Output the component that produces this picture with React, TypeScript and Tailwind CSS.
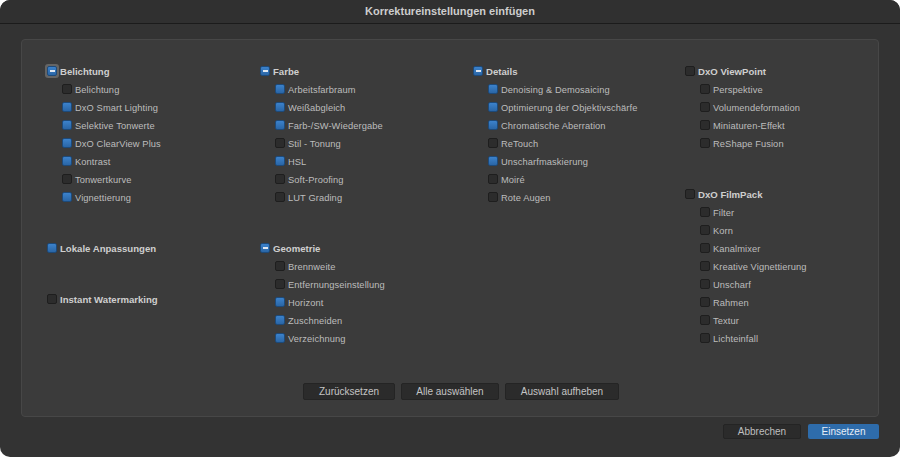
import React from "react";

type State = "on" | "off" | "mixed";

function Box({ s, focus }: { s: State; focus?: boolean }) {
  const base =
    s === "off"
      ? "bg-[#2c2c2c] border-[#1e1e1e]"
      : "bg-gradient-to-b from-[#3c82cb] to-[#2a66a6] border-[#1d4a7a]";
  const box = (
    <span
      className={`relative flex h-[10px] w-[10px] shrink-0 items-center justify-center rounded-[2px] border ${base}`}
    >
      {s === "mixed" && <span className="h-[1.5px] w-[5px] bg-[#dfe7f1]" />}
    </span>
  );
  if (focus) {
    return (
      <span className="-m-[2px] flex h-[14px] w-[14px] shrink-0 items-center justify-center rounded-[3px] bg-[#656565]">
        {box}
      </span>
    );
  }
  return box;
}

type Group = { title: string; s: State; focus?: boolean; items: [string, boolean][] };

function GroupView({ g, first }: { g: Group; first?: boolean }) {
  return (
    <div className={first ? "" : "mt-[33px]"}>
      <div className="flex h-[18px] items-center gap-[3px]">
        <Box s={g.s} focus={g.focus} />
        <span className="pt-[1px] text-[9.6px] leading-[14px] font-bold text-[#cfcfcf]">{g.title}</span>
      </div>
      {g.items.map(([t, on]) => (
        <div key={t} className="flex h-[18px] items-center gap-[3px] pl-[15px]">
          <Box s={on ? "on" : "off"} />
          <span className="pt-[1px] text-[9.3px] leading-[14px] tracking-[0.1px] text-[#bdbdbd]">{t}</span>
        </div>
      ))}
    </div>
  );
}

const cols: Group[][] = [
  [
    {
      title: "Belichtung",
      s: "mixed",
      focus: true,
      items: [
        ["Belichtung", false],
        ["DxO Smart Lighting", true],
        ["Selektive Tonwerte", true],
        ["DxO ClearView Plus", true],
        ["Kontrast", true],
        ["Tonwertkurve", false],
        ["Vignettierung", true],
      ],
    },
    { title: "Lokale Anpassungen", s: "on", items: [] },
    { title: "Instant Watermarking", s: "off", items: [] },
  ],
  [
    {
      title: "Farbe",
      s: "mixed",
      items: [
        ["Arbeitsfarbraum", true],
        ["Weißabgleich", true],
        ["Farb-/SW-Wiedergabe", true],
        ["Stil - Tonung", false],
        ["HSL", true],
        ["Soft-Proofing", false],
        ["LUT Grading", false],
      ],
    },
    {
      title: "Geometrie",
      s: "mixed",
      items: [
        ["Brennweite", false],
        ["Entfernungseinstellung", false],
        ["Horizont", true],
        ["Zuschneiden", true],
        ["Verzeichnung", true],
      ],
    },
  ],
  [
    {
      title: "Details",
      s: "mixed",
      items: [
        ["Denoising & Demosaicing", true],
        ["Optimierung der Objektivschärfe", true],
        ["Chromatische Aberration", true],
        ["ReTouch", false],
        ["Unscharfmaskierung", true],
        ["Moiré", false],
        ["Rote Augen", false],
      ],
    },
  ],
  [
    {
      title: "DxO ViewPoint",
      s: "off",
      items: [
        ["Perspektive", false],
        ["Volumendeformation", false],
        ["Miniaturen-Effekt", false],
        ["ReShape Fusion", false],
      ],
    },
    {
      title: "DxO FilmPack",
      s: "off",
      items: [
        ["Filter", false],
        ["Korn", false],
        ["Kanalmixer", false],
        ["Kreative Vignettierung", false],
        ["Unscharf", false],
        ["Rahmen", false],
        ["Textur", false],
        ["Lichteinfall", false],
      ],
    },
  ],
];

function Btn({ children, w }: { children: React.ReactNode; w: string }) {
  return (
    <div
      className={`flex h-[17px] ${w} items-center justify-center rounded-[2px] border border-[#242424] bg-[#2b2b2b] text-[10px] text-[#c4c4c4]`}
    >
      {children}
    </div>
  );
}

export default function App() {
  return (
    <div
      className="h-[457px] w-[900px] bg-white"
      style={{ fontFamily: '"Liberation Sans", Arial, sans-serif' }}
    >
      <div className="flex h-full w-full flex-col overflow-hidden rounded-[10px] bg-[#333333]">
        <div className="flex h-[24px] shrink-0 items-center justify-center border-b border-[#1b1b1b] bg-[#303030]">
          <span className="text-[11px] font-bold text-[#cdcdcd]">Korrektureinstellungen einfügen</span>
        </div>
        <div className="flex flex-1 flex-col px-[21px] pt-[15px]">
          <div className="flex h-[378px] flex-col rounded-[4px] border border-[#474747] bg-[#3b3b3b] pl-[25px] pt-[22px]">
            <div className="flex flex-1">
              <div className="w-[213px]">
                {cols[0].map((g, i) => (
                  <GroupView key={g.title} g={g} first={i === 0} />
                ))}
              </div>
              <div className="w-[213px]">
                {cols[1].map((g, i) => (
                  <GroupView key={g.title} g={g} first={i === 0} />
                ))}
              </div>
              <div className="w-[212px]">
                {cols[2].map((g, i) => (
                  <GroupView key={g.title} g={g} first={i === 0} />
                ))}
              </div>
              <div className="flex-1">
                {cols[3].map((g, i) => (
                  <GroupView key={g.title} g={g} first={i === 0} />
                ))}
              </div>
            </div>
            <div className="flex justify-center gap-[6px] pb-[16px] pr-[3px]">
              <Btn w="w-[92px]">Zurücksetzen</Btn>
              <Btn w="w-[98px]">Alle auswählen</Btn>
              <Btn w="w-[114px]">Auswahl aufheben</Btn>
            </div>
          </div>
          <div className="mt-[7px] flex justify-end gap-[7px]">
            <div className="flex h-[15px] w-[78px] items-center justify-center rounded-[2px] border border-[#242424] bg-[#2b2b2b] text-[10px] text-[#bfbfbf]">
              Abbrechen
            </div>
            <div className="flex h-[15px] w-[71px] items-center justify-center rounded-[2px] bg-[#2e6cab] text-[10px] text-[#e6eef7]">
              Einsetzen
            </div>
          </div>
        </div>
      </div>
    </div>
  );
}
